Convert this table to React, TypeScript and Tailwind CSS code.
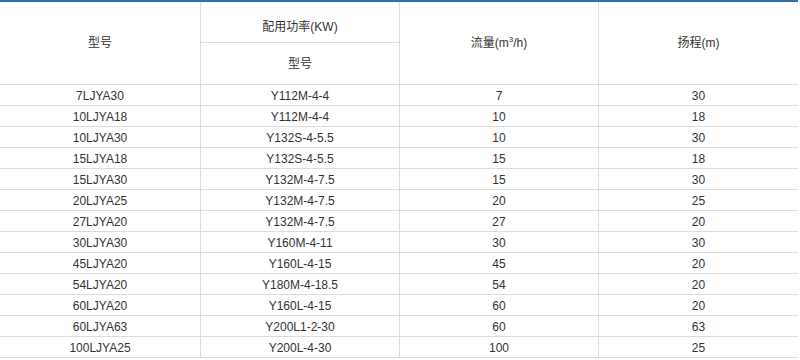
import React from "react";

const rows: [string, string, string, string][] = [
  ["7LJYA30", "Y112M-4-4", "7", "30"],
  ["10LJYA18", "Y112M-4-4", "10", "18"],
  ["10LJYA30", "Y132S-4-5.5", "10", "30"],
  ["15LJYA18", "Y132S-4-5.5", "15", "18"],
  ["15LJYA30", "Y132M-4-7.5", "15", "30"],
  ["20LJYA25", "Y132M-4-7.5", "20", "25"],
  ["27LJYA20", "Y132M-4-7.5", "27", "20"],
  ["30LJYA30", "Y160M-4-11", "30", "30"],
  ["45LJYA20", "Y160L-4-15", "45", "20"],
  ["54LJYA20", "Y180M-4-18.5", "54", "20"],
  ["60LJYA20", "Y160L-4-15", "60", "20"],
  ["60LJYA63", "Y200L1-2-30", "60", "63"],
  ["100LJYA25", "Y200L-4-30", "100", "25"],
];

const font = {
  fontFamily: '"Liberation Sans", Arial, "Noto Sans CJK SC", sans-serif',
};

export default function App() {
  return (
    <div className="w-[800px] h-[360px] bg-white text-[12px] text-[#333]" style={font}>
      <div className="w-[798px] border-t-2 border-[#2e6fb4]">
        <div className="grid grid-cols-[201px_199px_199px_199px] grid-rows-[41px_42px]">
          <div className="row-span-2 border-r border-b border-[#dcdcdc] flex items-center justify-center">
            型号
          </div>
          <div className="border-r border-b border-[#dcdcdc] flex items-center justify-center pt-[9px]">
            配用功率(KW)
          </div>
          <div className="row-span-2 border-r border-b border-[#dcdcdc] flex items-center justify-center">
            <span>
              流量(m<sup className="text-[8px] relative -top-[5px]">3</sup>/h)
            </span>
          </div>
          <div className="row-span-2 border-b border-[#dcdcdc] flex items-center justify-center">
            扬程(m)
          </div>
          <div className="border-r border-b border-[#dcdcdc] flex items-center justify-center">
            型号
          </div>
        </div>
        {rows.map((r, i) => (
          <div key={i} className="grid grid-cols-[201px_199px_199px_199px]">
            {r.map((c, j) => (
              <div
                key={j}
                className={
                  "h-[21px] pt-[2px] leading-[18px] text-center border-b border-[#dcdcdc] " +
                  (j < 3 ? "border-r" : "")
                }
              >
                {c}
              </div>
            ))}
          </div>
        ))}
      </div>
    </div>
  );
}
